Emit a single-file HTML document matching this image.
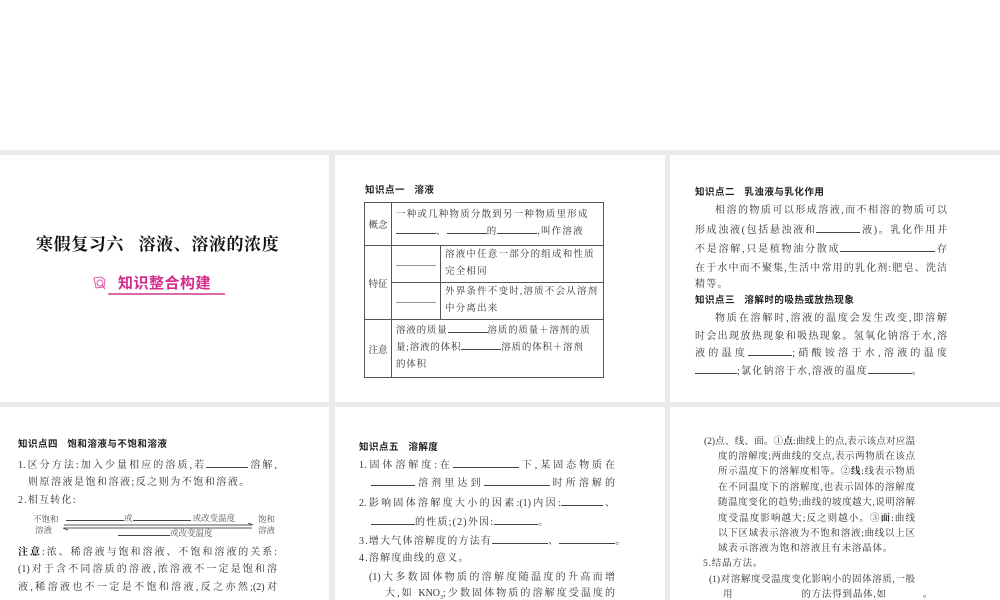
<!DOCTYPE html>
<html><head><meta charset="utf-8"><style>
*{margin:0;padding:0;box-sizing:border-box}
body{width:1000px;height:600px;background:#fff;position:relative;overflow:hidden;font-family:"Liberation Serif","Noto Serif CJK SC",serif;color:#333}
.g{position:absolute;left:0;top:150px;width:1000px;height:450px;background:#ebebeb}
.p{position:absolute;background:#fff;overflow:hidden}
.l{position:absolute;white-space:nowrap;font-size:10px;line-height:12px;text-align:justify;text-align-last:justify}
.n{text-align-last:auto;letter-spacing:1.2px}
.h{font-family:"Liberation Sans","Noto Sans CJK SC",sans-serif;font-weight:bold;font-size:9.5px;color:#222;letter-spacing:0.5px}
.b{display:inline-block;border-bottom:1px solid #444;height:0;vertical-align:baseline}
.s{font-size:9.5px}
.s.n{letter-spacing:0.8px}
table{position:absolute;border-collapse:collapse;font-size:9.5px;color:#333}
td{border:1px solid #555;padding:0 4px}
td.c{white-space:nowrap;text-align:center;padding:0 2px}
</style></head><body>
<div class="g"></div>
<!-- panel 1 -->
<div class="p" style="left:0;top:155px;width:329px;height:247px">
<div class="l n" style="left:36px;top:79px;font-size:17px;line-height:22px;font-weight:bold;color:#111;letter-spacing:0.6px">寒假复习六&nbsp;&nbsp;&nbsp;溶液、溶液的浓度</div>
<svg style="position:absolute;left:92px;top:120px" width="16" height="16" viewBox="0 0 16 16"><path d="M2 3 L9 2 L13 5 L12 12 L4 13 Z" fill="none" stroke="#e05aa8" stroke-width="1"/><circle cx="8" cy="8" r="3" fill="none" stroke="#e05aa8"/><path d="M10 10 L13 14" stroke="#e05aa8" stroke-width="1.2"/></svg>
<div class="l n" style="left:118px;top:120px;font-family:'Liberation Sans','Noto Sans CJK SC',sans-serif;font-weight:bold;font-size:15px;line-height:17px;color:#d42c8c;letter-spacing:0.5px">知识整合构建</div>
<div style="position:absolute;left:108px;top:138px;width:117px;height:2px;background:#d86aa8"></div>
</div>
<!-- panel 2 -->
<div class="p" style="left:335px;top:155px;width:330px;height:247px">
<div class="l n h" style="left:30px;top:30px">知识点一&nbsp;&nbsp;&nbsp;溶液</div>
<table style="left:29px;top:47px;width:240px;height:175px">
<tr style="height:43px"><td class="c" style="width:27px">概念</td><td colspan="2" style="line-height:17px;letter-spacing:1.2px;white-space:nowrap">一种或几种物质分散到另一种物质里形成<br><span class="b" style="width:40px"></span>、<span class="b" style="width:40px"></span>的<span class="b" style="width:40px"></span>,叫作溶液</td></tr>
<tr style="height:37px"><td class="c" rowspan="2">特征</td><td style="width:47px;vertical-align:middle"><span class="b" style="width:40px;border-color:#999"></span></td><td style="line-height:17px;letter-spacing:1.2px;white-space:nowrap">溶液中任意一部分的组成和性质<br>完全相同</td></tr>
<tr style="height:37px"><td><span class="b" style="width:40px;border-color:#999"></span></td><td style="line-height:17px;letter-spacing:1.2px;white-space:nowrap">外界条件不变时,溶质不会从溶剂<br>中分离出来</td></tr>
<tr style="height:58px"><td class="c">注意</td><td colspan="2" style="line-height:17px;letter-spacing:0.8px;white-space:nowrap">溶液的质量<span class="b" style="width:40px"></span>溶质的质量＋溶剂的质<br>量;溶液的体积<span class="b" style="width:40px"></span>溶质的体积＋溶剂<br>的体积</td></tr>
</table>
</div>
<!-- panel 3 -->
<div class="p" style="left:670px;top:155px;width:330px;height:247px">
<div class="l n h" style="left:25px;top:32px">知识点二&nbsp;&nbsp;&nbsp;乳浊液与乳化作用</div>
<div class="l" style="left:45px;top:50px;width:232px">相溶的物质可以形成溶液,而不相溶的物质可以</div>
<div class="l" style="left:25px;top:70px;width:252px">形成浊液(包括悬浊液和<span class="b" style="width:44px"></span>液)。乳化作用并</div>
<div class="l" style="left:25px;top:89px;width:252px">不是溶解,只是植物油分散成<span class="b" style="width:95px"></span>存</div>
<div class="l" style="left:25px;top:108px;width:252px">在于水中而不聚集,生活中常用的乳化剂:肥皂、洗洁</div>
<div class="l n" style="left:25px;top:124px">精等。</div>
<div class="l n h" style="left:25px;top:140px">知识点三&nbsp;&nbsp;&nbsp;溶解时的吸热或放热现象</div>
<div class="l" style="left:45px;top:158px;width:232px">物质在溶解时,溶液的温度会发生改变,即溶解</div>
<div class="l" style="left:25px;top:176px;width:252px">时会出现放热现象和吸热现象。氢氧化钠溶于水,溶</div>
<div class="l" style="left:25px;top:193px;width:252px">液的温度<span class="b" style="width:44px"></span>;硝酸铵溶于水,溶液的温度</div>
<div class="l n" style="left:25px;top:211px"><span class="b" style="width:42px"></span>;氯化钠溶于水,溶液的温度<span class="b" style="width:44px"></span>。</div>
</div>
<!-- panel 4 -->
<div class="p" style="left:0;top:407px;width:329px;height:193px">
<div class="l n h" style="left:18px;top:32px">知识点四&nbsp;&nbsp;&nbsp;饱和溶液与不饱和溶液</div>
<div class="l" style="left:18px;top:53px;width:259px">1.区分方法:加入少量相应的溶质,若<span class="b" style="width:42px"></span>溶解,</div>
<div class="l n" style="left:28px;top:70px;letter-spacing:1.5px">则原溶液是饱和溶液;反之则为不饱和溶液。</div>
<div class="l n" style="left:18px;top:88px">2.相互转化:</div>
<div class="l n" style="left:33px;top:107px;font-size:8.5px;line-height:11px;color:#555;letter-spacing:0">不饱和<br>&nbsp;溶液</div>
<div class="l n" style="left:258px;top:107px;font-size:8.5px;line-height:11px;color:#555;letter-spacing:0">饱和<br>溶液</div>
<div class="l n" style="left:66px;top:105px;font-size:8.5px;color:#555;letter-spacing:0"><span class="b" style="width:58px"></span>或<span class="b" style="width:58px"></span> 或改变温度</div>
<div class="l n" style="left:118px;top:120px;font-size:8.5px;color:#555;letter-spacing:0"><span class="b" style="width:52px"></span>或改变温度</div>
<svg style="position:absolute;left:60px;top:116px" width="196" height="8"><path d="M4 2 H192 M188 0 L193 2" stroke="#555" fill="none"/><path d="M4 5 H192 M8 7 L3 5" stroke="#555" fill="none"/></svg>
<div class="l" style="left:18px;top:140px;width:259px"><b style="color:#111">注意</b>:浓、稀溶液与饱和溶液、不饱和溶液的关系:</div>
<div class="l" style="left:18px;top:157px;width:259px">(1)对于含不同溶质的溶液,浓溶液不一定是饱和溶</div>
<div class="l" style="left:18px;top:175px;width:259px">液,稀溶液也不一定是不饱和溶液,反之亦然;(2)对</div>
</div>
<!-- panel 5 -->
<div class="p" style="left:335px;top:407px;width:330px;height:193px">
<div class="l n h" style="left:24px;top:35px">知识点五&nbsp;&nbsp;&nbsp;溶解度</div>
<div class="l" style="left:24px;top:53px;width:256px">1.固体溶解度:在<span class="b" style="width:66px"></span>下,某固态物质在</div>
<div class="l" style="left:36px;top:71px;width:244px"><span class="b" style="width:44px"></span>溶剂里达到<span class="b" style="width:66px"></span>时所溶解的</div>
<div class="l" style="left:24px;top:91px;width:256px">2.影响固体溶解度大小的因素:(1)内因:<span class="b" style="width:42px"></span>、</div>
<div class="l n" style="left:36px;top:110px"><span class="b" style="width:44px"></span>的性质;(2)外因:<span class="b" style="width:44px"></span>。</div>
<div class="l n" style="left:24px;top:129px">3.增大气体溶解度的方法有<span class="b" style="width:56px"></span>、<span class="b" style="width:56px"></span>。</div>
<div class="l n" style="left:24px;top:146px">4.溶解度曲线的意义。</div>
<div class="l" style="left:34px;top:165px;width:246px">(1)大多数固体物质的溶解度随温度的升高而增</div>
<div class="l" style="left:50px;top:181px;width:230px">大,如 KNO<sub style="font-size:6px;line-height:0">3</sub>;少数固体物质的溶解度受温度的</div>
</div>
<!-- panel 6 -->
<div class="p" style="left:670px;top:407px;width:330px;height:193px">
<div class="l s" style="left:34px;top:29px;width:211px">(2)点、线、面。①<b>点</b>:曲线上的点,表示该点对应温</div>
<div class="l s" style="left:48px;top:44px;width:197px">度的溶解度;两曲线的交点,表示两物质在该点</div>
<div class="l s" style="left:48px;top:59px;width:197px">所示温度下的溶解度相等。②<b>线</b>:线表示物质</div>
<div class="l s" style="left:48px;top:75px;width:197px">在不同温度下的溶解度,也表示固体的溶解度</div>
<div class="l s" style="left:48px;top:90px;width:197px">随温度变化的趋势;曲线的坡度越大,说明溶解</div>
<div class="l s" style="left:48px;top:106px;width:197px">度受温度影响越大;反之则越小。③<b>面</b>:曲线</div>
<div class="l s" style="left:48px;top:121px;width:197px">以下区域表示溶液为不饱和溶液;曲线以上区</div>
<div class="l s n" style="left:48px;top:136px">域表示溶液为饱和溶液且有未溶晶体。</div>
<div class="l s n" style="left:33px;top:151px">5.结晶方法。</div>
<div class="l s" style="left:39px;top:167px;width:206px">(1)对溶解度受温度变化影响小的固体溶质,一般</div>
<div class="l s n" style="left:53px;top:182px">用<span style="display:inline-block;width:68px"></span>的方法得到晶体,如<span style="display:inline-block;width:36px"></span>。</div>
</div>
</body></html>
